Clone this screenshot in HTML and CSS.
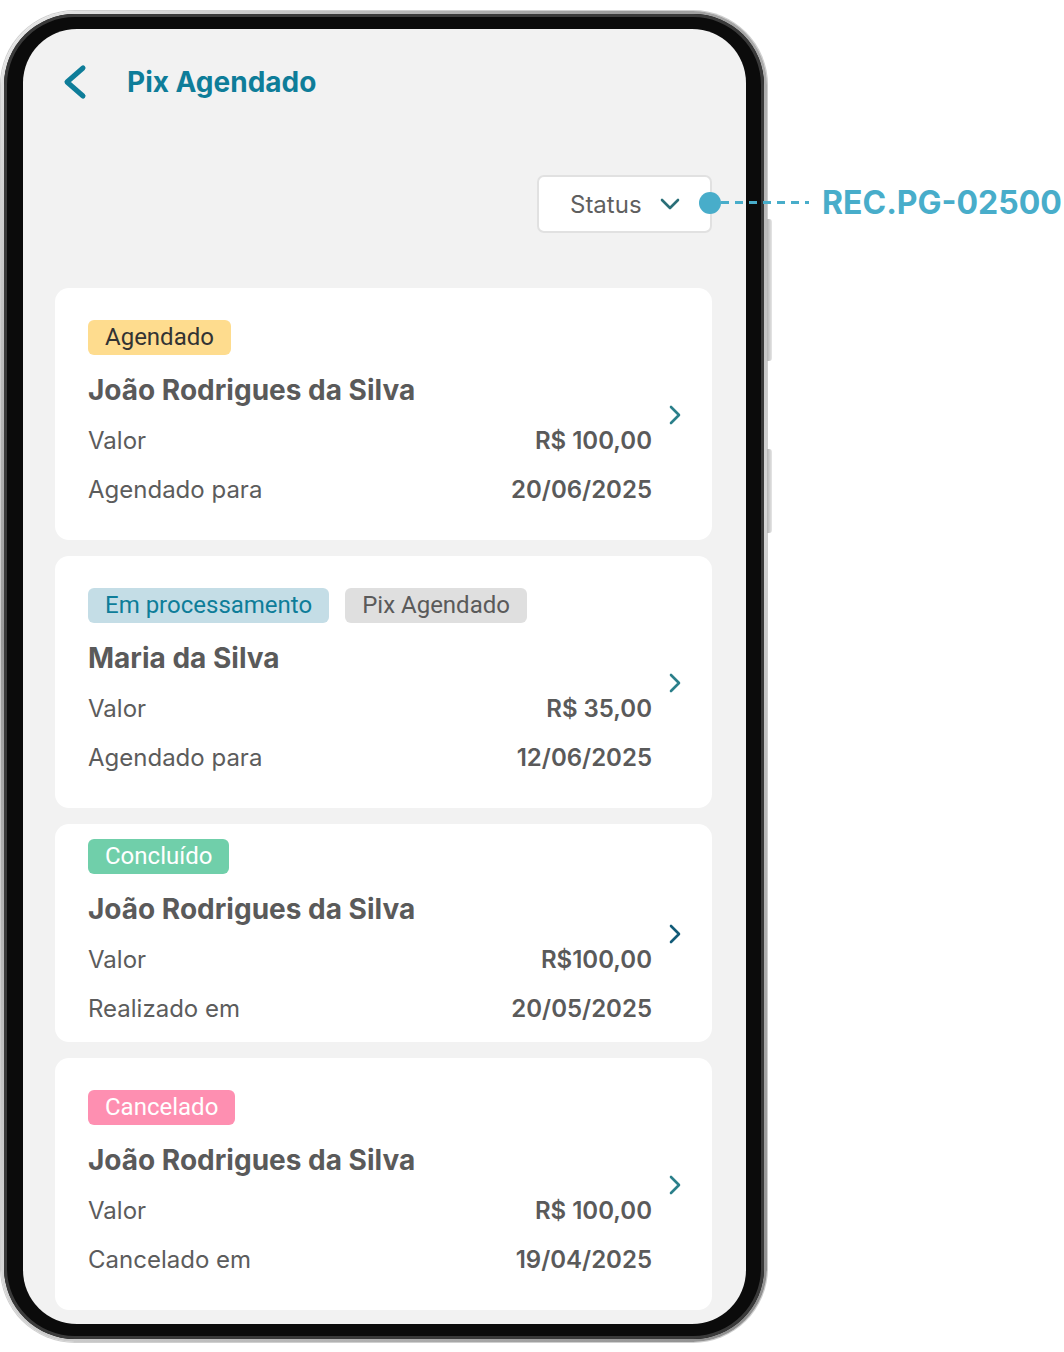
FILE: index.html
```html
<!DOCTYPE html>
<html lang="pt-br">

<head>
    <meta charset="UTF-8">
    <meta name="viewport" content="width=device-width, initial-scale=1.0">
    <title>Pix Agendado</title>
    <link rel="stylesheet" href="styles.css">
</head>

<body>
    <div id="stage">
        <div class="phone">
            <span class="side_btn side_btn_1"></span>
            <span class="side_btn side_btn_2"></span>

            <div class="bezel">
                <div class="screen">

                    <header class="top_bar">
                        <button class="back_btn" aria-label="Voltar">
                            <svg width="24" height="36" viewBox="0 0 24 36">
                                <path d="M20 4 L4 18 L20 32" fill="none" stroke="#0e7d99" stroke-width="5"
                                    stroke-linecap="round" stroke-linejoin="round" />
                            </svg>
                        </button>
                        <h1 class="title">Pix Agendado</h1>
                    </header>

                    <div class="filter_row">
                        <button class="status_select">
                            <span>Status</span>
                            <svg width="20" height="14" viewBox="0 0 20 14">
                                <path d="M2 3 L10 11 L18 3" fill="none" stroke="#2a6f78" stroke-width="2.6"
                                    stroke-linecap="round" stroke-linejoin="round" />
                            </svg>
                        </button>
                    </div>

                    <div class="card_list">

                        <div class="card">
                            <div class="card_body">
                                <div class="tags">
                                    <span class="tag tag_agendado">Agendado</span>
                                </div>
                                <div class="name">João Rodrigues da Silva</div>
                                <div class="row">
                                    <span class="label">Valor</span>
                                    <span class="value">R$ 100,00</span>
                                </div>
                                <div class="row">
                                    <span class="label">Agendado para</span>
                                    <span class="value">20/06/2025</span>
                                </div>
                            </div>
                            <svg class="arrow" width="14" height="20" viewBox="0 0 14 20">
                                <path d="M3 2 L11 10 L3 18" fill="none" stroke="#2b7f8a" stroke-width="2.6"
                                    stroke-linecap="round" stroke-linejoin="round" />
                            </svg>
                        </div>

                        <div class="card">
                            <div class="card_body">
                                <div class="tags">
                                    <span class="tag tag_processando">Em processamento</span>
                                    <span class="tag tag_pix">Pix Agendado</span>
                                </div>
                                <div class="name">Maria da Silva</div>
                                <div class="row">
                                    <span class="label">Valor</span>
                                    <span class="value">R$ 35,00</span>
                                </div>
                                <div class="row">
                                    <span class="label">Agendado para</span>
                                    <span class="value">12/06/2025</span>
                                </div>
                            </div>
                            <svg class="arrow" width="14" height="20" viewBox="0 0 14 20">
                                <path d="M3 2 L11 10 L3 18" fill="none" stroke="#2b7f8a" stroke-width="2.6"
                                    stroke-linecap="round" stroke-linejoin="round" />
                            </svg>
                        </div>

                        <div class="card card_compact">
                            <div class="card_body">
                                <div class="tags">
                                    <span class="tag tag_concluido">Concluído</span>
                                </div>
                                <div class="name">João Rodrigues da Silva</div>
                                <div class="row">
                                    <span class="label">Valor</span>
                                    <span class="value">R$100,00</span>
                                </div>
                                <div class="row">
                                    <span class="label">Realizado em</span>
                                    <span class="value">20/05/2025</span>
                                </div>
                            </div>
                            <svg class="arrow" width="14" height="20" viewBox="0 0 14 20">
                                <path d="M3 2 L11 10 L3 18" fill="none" stroke="#125b78" stroke-width="2.6"
                                    stroke-linecap="round" stroke-linejoin="round" />
                            </svg>
                        </div>

                        <div class="card">
                            <div class="card_body">
                                <div class="tags">
                                    <span class="tag tag_cancelado">Cancelado</span>
                                </div>
                                <div class="name">João Rodrigues da Silva</div>
                                <div class="row">
                                    <span class="label">Valor</span>
                                    <span class="value">R$ 100,00</span>
                                </div>
                                <div class="row">
                                    <span class="label">Cancelado em</span>
                                    <span class="value">19/04/2025</span>
                                </div>
                            </div>
                            <svg class="arrow" width="14" height="20" viewBox="0 0 14 20">
                                <path d="M3 2 L11 10 L3 18" fill="none" stroke="#2b7f8a" stroke-width="2.6"
                                    stroke-linecap="round" stroke-linejoin="round" />
                            </svg>
                        </div>

                    </div>
                </div>
            </div>
        </div>

        <!-- marcador da especificação -->
        <div class="spec_tag">
            <span class="spec_dot"></span>
            <span class="spec_line"></span>
            <span class="spec_code">REC.PG-02500</span>
        </div>
    </div>
</body>

</html>
```

FILE: styles.css
```css
* {
    box-sizing: border-box;

    --teal: #0e7d99;
    --spec: #48adca;
    --text: #5a5a5a;
}

body,
html {
    padding: 0;
    margin: 0;
    background-color: #ffffff;
    font-family: "Inter", "Noto Sans", sans-serif;
}

#stage {
    position: relative;
    width: 1064px;
    height: 1352px;
    padding: 11px 0 0 1px;
}

/* aparelho */

.phone {
    position: relative;
    width: 766px;
    height: 1331px;
    padding: 3px;
    border-radius: 74px;
    background: linear-gradient(135deg, #e9e9e9, #9a9a9a 30%, #d6d6d6 60%, #8c8c8c);
    box-shadow: 0 0 0 1px #cfcfcf;
}

.side_btn {
    position: absolute;
    right: -5px;
    width: 5px;
    border-radius: 0 3px 3px 0;
    background: linear-gradient(to right, #b4b4b4, #e6e6e6);
}

.side_btn_1 {
    top: 208px;
    height: 142px;
}

.side_btn_2 {
    top: 438px;
    height: 84px;
}

.bezel {
    height: 100%;
    padding: 15px 18px 15px 19px;
    border-radius: 71px;
    background-color: #0b0b0b;
    box-shadow: inset 0 0 0 3px #3a3a3a;
}

.screen {
    height: 100%;
    padding: 0 34px 0 32px;
    border-radius: 54px;
    background-color: #f2f2f2;
    overflow: hidden;
    display: flex;
    flex-direction: column;
}

/* topo */

.top_bar {
    display: flex;
    align-items: center;
    height: 40px;
    margin-top: 33px;
}

.back_btn {
    display: flex;
    align-items: center;
    padding: 0;
    margin-left: 8px;
    border: none;
    background: none;
}

.title {
    margin: 0 0 0 40px;
    font-size: 28px;
    font-weight: 700;
    color: var(--teal);
}

.filter_row {
    display: flex;
    justify-content: flex-end;
    margin-top: 73px;
}

.status_select {
    display: flex;
    align-items: center;
    justify-content: space-between;
    width: 175px;
    height: 58px;
    padding: 0 30px 0 31px;
    border: 2px solid #e1e1e1;
    border-radius: 7px;
    background-color: #ffffff;

    font-family: "Inter", sans-serif;
    font-size: 24px;
    color: #5f5f5f;
}

/* cartões */

.card_list {
    display: flex;
    flex-direction: column;
    gap: 16px;
    margin-top: 55px;
}

.card {
    display: flex;
    align-items: center;
    padding: 32px 30px 30px 33px;
    border-radius: 14px;
    background-color: #ffffff;
}

.card_compact {
    padding-top: 15px;
    padding-bottom: 13px;
}

.card_body {
    flex: 1;
    margin-right: 16px;
}

.tags {
    display: flex;
    gap: 16px;
}

.tag {
    height: 35px;
    padding: 0 17px;
    border-radius: 6px;
    font-family: "Roboto", sans-serif;
    font-size: 24px;
    line-height: 35px;
}

.tag_agendado {
    background-color: #fedc8e;
    color: #333333;
}

.tag_processando {
    background-color: #c4dde6;
    color: #0e7d99;
}

.tag_pix {
    background-color: #dfdfdf;
    color: #5a5a5a;
}

.tag_concluido {
    background-color: #70cfaa;
    color: #ffffff;
}

.tag_cancelado {
    background-color: #fe8fb1;
    color: #ffffff;
}

.name {
    margin-top: 14px;
    height: 42px;
    font-size: 28px;
    font-weight: 700;
    line-height: 42px;
    color: var(--text);
}

.row {
    display: flex;
    justify-content: space-between;
    height: 48px;
    margin-top: 6px;
    line-height: 48px;
    font-size: 24px;
    color: #5c5c5c;
}

.row:last-child {
    height: 40px;
    line-height: 40px;
    margin-top: 5px;
}

.value {
    font-weight: 600;
    font-size: 24px;
    color: var(--text);
}

.arrow {
    flex-shrink: 0;
}

/* marcador */

.spec_tag {
    position: absolute;
    left: 699px;
    top: 183px;
    display: flex;
    align-items: center;
}

.spec_dot {
    width: 22px;
    height: 22px;
    border-radius: 50%;
    background-color: var(--spec);
}

.spec_line {
    width: 88px;
    height: 3px;
    background-image: linear-gradient(to right, var(--spec) 60%, transparent 60%);
    background-size: 14px 3px;
}

.spec_code {
    margin-left: 13px;
    font-size: 32px;
    font-weight: 700;
    color: var(--spec);
}
```
